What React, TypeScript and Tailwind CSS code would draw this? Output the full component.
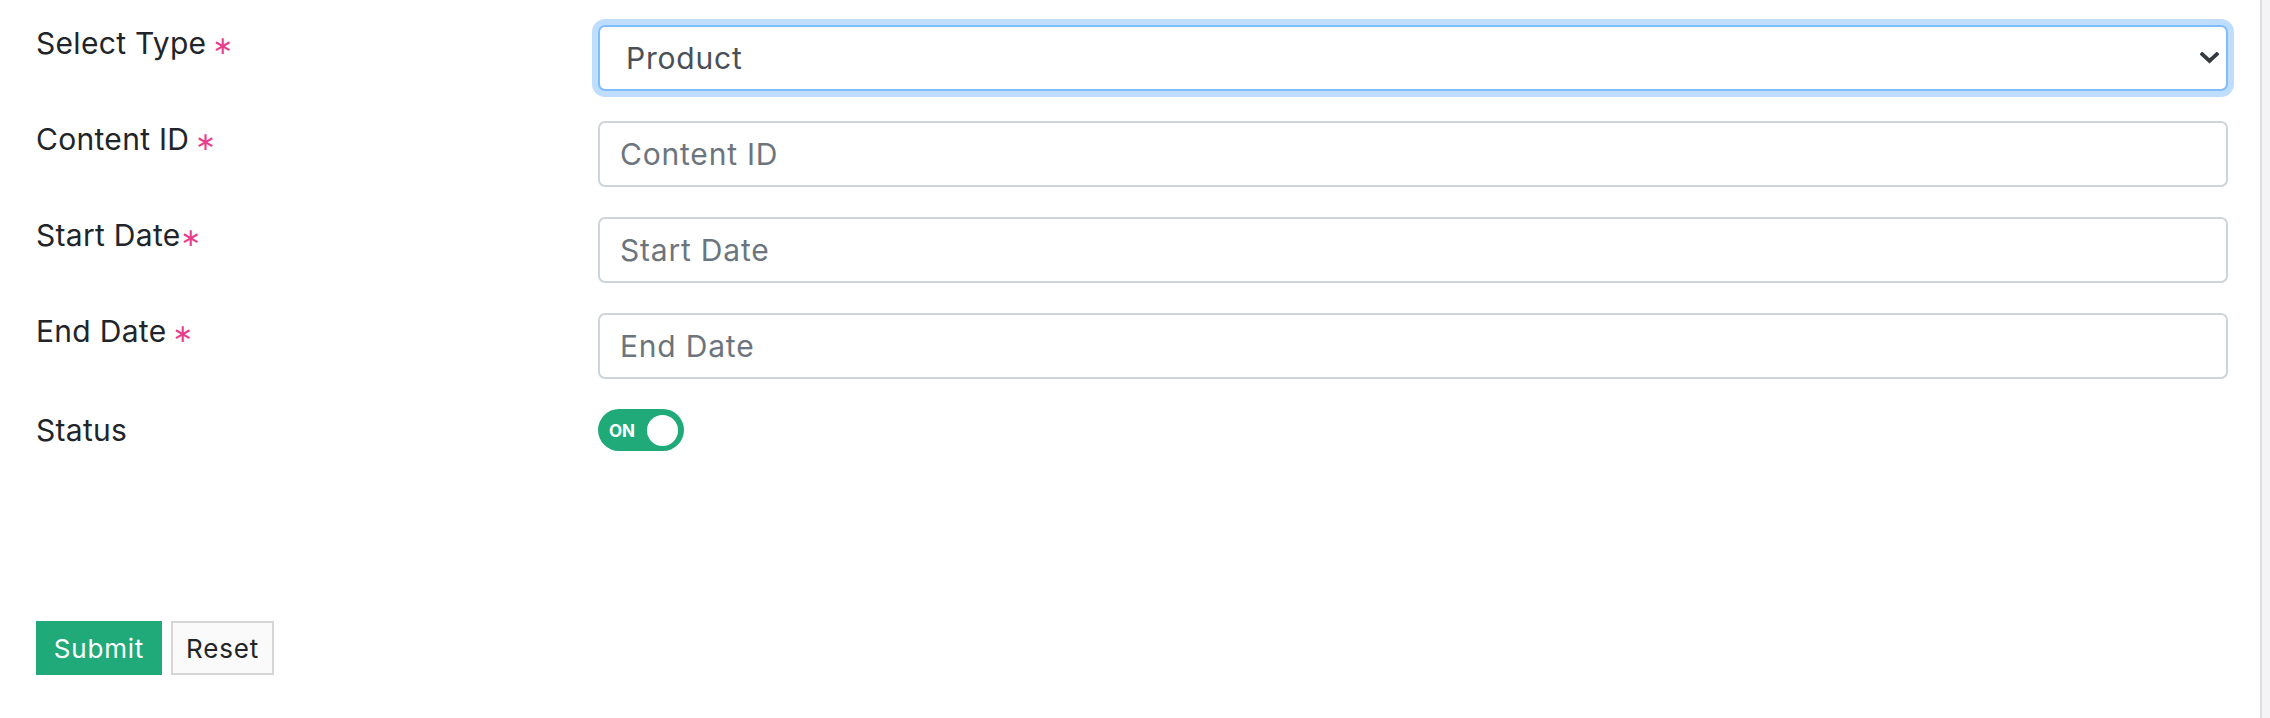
import { useState } from "react";

const font = { fontFamily: "Inter, 'Open Sans', sans-serif" };

function Req({ tight }: { tight?: boolean }) {
    return (
        <span
            className={`text-[#e83e8c] tracking-normal text-[25px] ${tight ? "ml-0" : "ml-[6px]"}`}
            style={{ fontFamily: "'DejaVu Sans', sans-serif" }}
        >
            ∗
        </span>
    );
}

const inputCls =
    "h-[66px] rounded-[7px] border-2 border-[#ced4da] px-[20px] text-[30px] tracking-[0.8px] text-[#495057] placeholder-[#6c757d] outline-none";

const labelCls = "text-[30px] leading-[37px] tracking-[0.3px]";

export default function App() {
    const [type, setType] = useState("product");
    const [status, setStatus] = useState(true);

    return (
        <div className="flex min-h-screen bg-white text-[#212529]" style={font}>
            <div className="flex-1 pl-[36px] pr-[32px] pt-[25px]">
                <form className="flex flex-col gap-[30px]" onSubmit={(e) => e.preventDefault()}>
                    <div className="grid grid-cols-[562px_1fr]">
                        <label className={labelCls}>
                            Select Type<Req />
                        </label>
                        <div className="relative">
                            <select
                                value={type}
                                onChange={(e) => setType(e.target.value)}
                                className="w-full h-[66px] appearance-none rounded-[7px] border-2 border-[#80bdff] bg-white pl-[26px] pr-[50px] text-[30px] tracking-[0.8px] text-[#495057] outline-none shadow-[0_0_0_6px_rgba(0,123,255,0.25)]"
                            >
                                <option value="product">Product</option>
                                <option value="category">Category</option>
                            </select>
                            <svg
                                className="absolute right-[9px] top-[27px] pointer-events-none"
                                width="19"
                                height="12"
                                viewBox="0 0 19 12"
                            >
                                <path d="M2.2 2.2 L9.5 9 L16.8 2.2" fill="none" stroke="#343a40" strokeWidth="3.8" strokeLinecap="square" />
                            </svg>
                        </div>
                    </div>

                    <div className="grid grid-cols-[562px_1fr]">
                        <label className={labelCls}>
                            Content ID<Req />
                        </label>
                        <input placeholder="Content ID" className={inputCls} />
                    </div>

                    <div className="grid grid-cols-[562px_1fr]">
                        <label className={labelCls}>
                            Start Date<Req tight />
                        </label>
                        <input placeholder="Start Date" className={inputCls} />
                    </div>

                    <div className="grid grid-cols-[562px_1fr]">
                        <label className={labelCls}>
                            End Date<Req />
                        </label>
                        <input placeholder="End Date" className={inputCls} />
                    </div>

                    <div className="grid grid-cols-[562px_1fr]">
                        <label className="text-[30px] leading-[42px] tracking-[0.3px]">Status</label>
                        <div>
                            <button
                                type="button"
                                onClick={() => setStatus(!status)}
                                className="flex items-center justify-between w-[86px] h-[42px] rounded-full bg-[#20aa7a] pl-[11px] pr-[6px]"
                            >
                                <span className="text-[17px] leading-none font-bold text-white pt-[2px]">ON</span>
                                <span className="w-[31px] h-[31px] rounded-full bg-white" />
                            </button>
                        </div>
                    </div>

                    <div className="flex gap-[9px] mt-[140px]">
                        <button type="submit" className="h-[54px] w-[126px] bg-[#20aa7a] text-[26px] tracking-[0.8px] text-white">
                            Submit
                        </button>
                        <button
                            type="reset"
                            className="h-[54px] w-[103px] border-2 border-[#d6d6d6] bg-[#fafafa] text-[26px] tracking-[0.8px] text-[#212529]"
                        >
                            Reset
                        </button>
                    </div>
                </form>
            </div>
            <div className="w-[10px] border-l-2 border-[#dcdce2] bg-[#f4f4f7]" />
        </div>
    );
}
